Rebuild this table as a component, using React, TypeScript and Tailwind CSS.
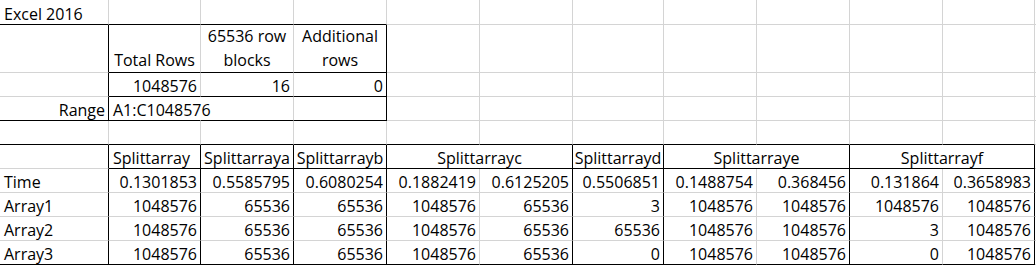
import React from 'react';

type Edge = 'k' | 'g' | 'n';

interface CellProps {
  children?: React.ReactNode;
  span?: 1 | 2;
  align?: 'l' | 'r' | 'c';
  r?: Edge;
  b?: Edge;
  tall?: boolean;
}

const rightCls: Record<Edge, string> = {
  k: 'border-r-black',
  g: 'border-r-[#d4d4d4]',
  n: 'border-r-transparent',
};

const bottomCls: Record<Edge, string> = {
  k: 'border-b-black',
  g: 'border-b-[#d4d4d4]',
  n: 'border-b-transparent',
};

const alignCls = {
  l: 'justify-start text-left pl-1',
  r: 'justify-end text-right pr-[3px]',
  c: 'justify-center text-center',
};

function Cell({ children, span = 1, align = 'l', r = 'g', b = 'g', tall = false }: CellProps) {
  return (
    <div
      className={[
        'flex items-end min-w-0 border-r border-b',
        span === 2 ? 'col-span-2' : '',
        rightCls[r],
        bottomCls[b],
        alignCls[align],
        tall ? 'leading-[24px] whitespace-normal' : 'leading-5 whitespace-nowrap',
      ].join(' ')}
    >
      {children != null && <span>{children}</span>}
    </div>
  );
}

// last 1px column past K
function Edge({ b = 'g' }: { b?: Edge }) {
  return <div className={'border-b ' + bottomCls[b]} />;
}

const dataRows = [
  ['Time', '0.1301853', '0.5585795', '0.6080254', '0.1882419', '0.6125205', '0.5506851', '0.1488754', '0.368456', '0.131864', '0.3658983'],
  ['Array1', '1048576', '65536', '65536', '1048576', '65536', '3', '1048576', '1048576', '1048576', '1048576'],
  ['Array2', '1048576', '65536', '65536', '1048576', '65536', '65536', '1048576', '1048576', '3', '1048576'],
  ['Array3', '1048576', '65536', '65536', '1048576', '65536', '0', '1048576', '1048576', '0', '1048576'],
];

// right border per column A..K in the lower table
const lowerRight: Edge[] = ['k', 'k', 'k', 'k', 'g', 'k', 'k', 'g', 'k', 'g', 'k'];

export default function App() {
  return (
    <div className="w-[1036px] h-[265px] bg-white overflow-hidden text-black text-[16px] font-['Open_Sans',sans-serif]">
      <div className="grid grid-cols-[109px_92px_93px_93px_93px_93px_91px_93px_93px_93px_92px_1fr] grid-rows-[25px_48px_24px_24px_24px_24px_24px_24px_24px_24px]">
        {/* row 1 */}
        <Cell b="k">Excel 2016</Cell>
        <Cell b="k" />
        <Cell b="k" />
        <Cell b="k" />
        {Array.from({ length: 7 }).map((_, i) => (
          <Cell key={'r1' + i} />
        ))}
        <Edge />

        {/* row 2 */}
        <Cell r="k" />
        <Cell align="c" b="k" tall>Total Rows</Cell>
        <Cell align="c" b="k" tall>65536 row blocks</Cell>
        <Cell align="c" r="k" b="k" tall>Additional rows</Cell>
        {Array.from({ length: 7 }).map((_, i) => (
          <Cell key={'r2' + i} />
        ))}
        <Edge />

        {/* row 3 */}
        <Cell r="k" />
        <Cell align="r" b="k">1048576</Cell>
        <Cell align="r" b="k">16</Cell>
        <Cell align="r" r="k" b="k">0</Cell>
        {Array.from({ length: 7 }).map((_, i) => (
          <Cell key={'r3' + i} />
        ))}
        <Edge />

        {/* row 4 */}
        <Cell align="r" r="k" b="k">Range</Cell>
        <Cell r="n" b="k">A1:C1048576</Cell>
        <Cell b="k" />
        <Cell r="k" b="k" />
        {Array.from({ length: 7 }).map((_, i) => (
          <Cell key={'r4' + i} />
        ))}
        <Edge />

        {/* row 5 */}
        {Array.from({ length: 11 }).map((_, i) => (
          <Cell key={'r5' + i} b="k" />
        ))}
        <Edge />

        {/* row 6 headers */}
        <Cell r="k" />
        <Cell r="k" b="k">Splittarray</Cell>
        <Cell align="c" r="k" b="k">Splittarraya</Cell>
        <Cell align="c" r="k" b="k">Splittarrayb</Cell>
        <Cell align="c" span={2} r="k" b="k">Splittarrayc</Cell>
        <Cell align="c" r="k" b="k">Splittarrayd</Cell>
        <Cell align="c" span={2} r="k" b="k">Splittarraye</Cell>
        <Cell align="c" span={2} r="k" b="k">Splittarrayf</Cell>
        <Edge />

        {/* data */}
        {dataRows.map((row, ri) => {
          const last = ri === dataRows.length - 1;
          return (
            <React.Fragment key={row[0]}>
              {row.map((v, ci) => (
                <Cell key={ci} align={ci === 0 ? 'l' : 'r'} r={lowerRight[ci]} b={last ? 'k' : 'g'}>
                  {v}
                </Cell>
              ))}
              <Edge />
            </React.Fragment>
          );
        })}
      </div>
    </div>
  );
}
